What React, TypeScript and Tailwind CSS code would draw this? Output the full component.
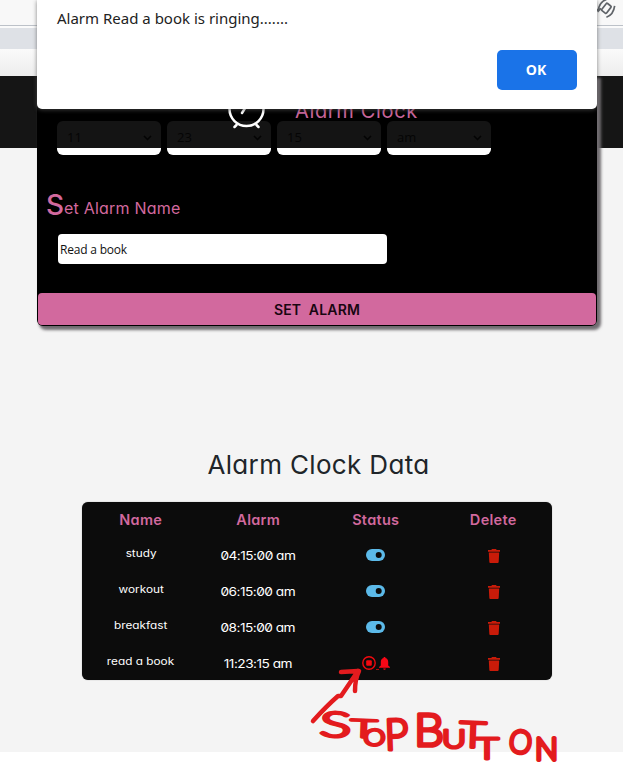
import type { ReactNode } from "react";

const rows = [
  { name: "study", time: "04:15:00 am", ringing: false },
  { name: "workout", time: "06:15:00 am", ringing: false },
  { name: "breakfast", time: "08:15:00 am", ringing: false },
  { name: "read a book", time: "11:23:15 am", ringing: true },
];

const marks = [
  { c: "S", x: 319, y: 736, h: 25, w: 32, r: 3, s: 2.8 },
  { c: "T", x: 350, y: 737, h: 18, w: 27, r: 2, s: 2.5 },
  { c: "O", x: 364, y: 746, h: 16, w: 22, r: -4, s: 3 },
  { c: "P", x: 385, y: 750, h: 31, w: 24, r: -2, s: 3.4 },
  { c: "B", x: 414, y: 746, h: 33, w: 30, r: 0, s: 3.6 },
  { c: "U", x: 442, y: 748, h: 19, w: 24, r: 0, s: 3.2 },
  { c: "T", x: 459, y: 747, h: 26, w: 27, r: 2, s: 3 },
  { c: "T", x: 475, y: 759, h: 21, w: 24, r: 0, s: 2.8 },
  { c: "O", x: 508, y: 752, h: 23, w: 23, r: 6, s: 3.6 },
  { c: "N", x: 535, y: 760, h: 22, w: 23, r: 0, s: 3.8 },
];

function Comic({ children, className }: { children: ReactNode; className: string }) {
  return (
    <span className={`inline-block whitespace-pre font-['Inter',sans-serif] [font-feature-settings:'cv11'] ${className}`}>
      {children}
    </span>
  );
}

function Select({ value }: { value: string }) {
  return (
    <div className="h-[34px] w-[104px] rounded-[6px] bg-[linear-gradient(#141414_27px,#ffffff_27px)]">
      <div className="flex h-[27px] items-center justify-between pl-[10px] pr-[9px] pt-[6px] font-['Open_Sans',sans-serif] text-[13px] text-[#050505]">
        <span>{value}</span>
        <svg width="9" height="6" viewBox="0 0 9 6" fill="none" stroke="#030303" strokeWidth="1.5">
          <path d="M1 1l3.5 3.5L8 1" />
        </svg>
      </div>
    </div>
  );
}

function Toggle() {
  return (
    <svg width="19" height="12" viewBox="0 0 19 12">
      <rect width="19" height="12" rx="6" fill="#5cbae9" />
      <circle cx="12.7" cy="6" r="3" fill="#0c0c0c" />
    </svg>
  );
}

function Trash() {
  return (
    <svg className="ml-[2px]" width="12" height="14" viewBox="0 0 12 14" fill="#c91b09">
      <path d="M4 0h4l.7.9H12v1.800H0V.9h3.300zM.8 3.400h10.400l-.5 9.300c0 .8-.5 1.300-1.300 1.300H2.600c-.8 0-1.300-.5-1.300-1.300z" />
    </svg>
  );
}

function Ringing() {
  return (
    <div className="flex items-center">
      <svg width="14" height="14" viewBox="0 0 14 14">
        <circle cx="7" cy="7" r="6.200" fill="none" stroke="#f1090f" strokeWidth="1.400" />
        <rect x="4.200" y="4.200" width="5.600" height="5.600" rx="1" fill="#f1090f" />
      </svg>
      <span className="mt-[13px] h-px w-[3px] bg-[#b00b0b]" />
      <svg width="11" height="13" viewBox="0 0 11 13" fill="#f90716">
        <path d="M5.500 0c.7 0 1 .4 1 1 1.800.5 2.700 2 2.700 4v3.500L11 10v.8H0V10l1.800-1.500V5c0-2 .9-3.500 2.700-4 0-.6.300-1 1-1zM4.200 11.500h2.600c0 1.700-2.600 1.700-2.600 0z" />
      </svg>
    </div>
  );
}

export default function App() {
  return (
    <div className="relative h-[767px] w-[623px] overflow-hidden bg-white">
      <div className="flex h-[26px] justify-end border-b border-[#bcc1c8] bg-[#f8f8f8]">
        <svg width="26" height="22" viewBox="0 0 26 22" fill="none" stroke="#5f6368" strokeWidth="1.700">
          <g transform="rotate(38 9 8)">
            <rect x="6.500" y="3.500" width="6" height="9" rx="1" />
            <path d="M4 1c-2.500 4-2.500 9 .5 14M1 14.500l3.800.8.5-3.800M15 15c2.500-4 2.500-9-.5-14" />
          </g>
        </svg>
      </div>
      <div className="h-[2px] bg-[#fafafa]" />
      <div className="h-[21px] bg-[#dee1e6]" />
      <div className="h-[27px] bg-gradient-to-b from-[#fafafa] to-[#ededed]" />
      <div className="h-[72px] bg-[#151515]" />
      <div className="h-[604px] bg-[#f4f4f4]">
        <div className="relative -top-[72px] ml-[37px] flex h-[250px] w-[560px] flex-col rounded-b-[6px] bg-black shadow-[3px_3px_3px_1px_#706c70]">
          <div className="relative z-10 flex h-[45px] items-end">
            <svg className="mb-[-11px] ml-[190px] shrink-0" width="40" height="40" viewBox="0 0 40 40" fill="none" stroke="white" strokeWidth="2.500" strokeLinecap="round">
              <circle cx="19.500" cy="17" r="17" />
              <path d="M20 13l-5 8M9.500 33l-2 2M29.500 33l2 2" />
            </svg>
            <Comic className="ml-[28px] text-[20px] leading-[20px] tracking-[0.650px] text-[#c9659a]">Alarm Clock</Comic>
          </div>
          <div className="flex gap-[6px] pl-[20px]">
            <Select value="11" />
            <Select value="23" />
            <Select value="15" />
            <Select value="am" />
          </div>
          <div className="flex h-[79px] items-end pb-[15px] pl-[9px] text-[#d2699e]">
            <Comic className="text-[28px] font-medium leading-[28px]">S</Comic>
            <Comic className="mb-[-1px] text-[16px] leading-[24px] tracking-[0.200px]">et Alarm Name</Comic>
          </div>
          <div className="ml-[21px] flex h-[30px] w-[329px] items-center rounded-[4px] bg-white pl-[2px] pt-[2px] font-['Open_Sans',sans-serif] text-[12px] tracking-[-0.200px] text-[#111]">
            Read a book
          </div>
          <div className="mx-px mb-px mt-auto flex h-[32px] items-center justify-center rounded-[4px] bg-[#d2699e] text-[#180611]">
            <Comic className="text-[14px] font-semibold tracking-[0.200px]">SET  ALARM</Comic>
          </div>
        </div>
        <div className="mt-[49px] text-center">
          <Comic className="ml-[14px] text-[26px] leading-[36px] tracking-[0.350px] text-[#202529]">Alarm Clock Data</Comic>
        </div>
        <div className="ml-[82px] mt-[19px] h-[178px] w-[470px] rounded-[6px] bg-[#0c0c0c] shadow-[0_0_1px_#777]">
          <div className="grid h-[36px] grid-cols-4 items-center justify-items-center text-[#d2699e]">
            {["Name", "Alarm", "Status", "Delete"].map((h) => (
              <Comic key={h} className="text-[14.500px] font-semibold tracking-[0.300px]">{h}</Comic>
            ))}
          </div>
          {rows.map((r) => (
            <div key={r.name} className="grid h-[36px] grid-cols-4 items-center justify-items-center font-['Inter',sans-serif] text-white [font-feature-settings:'zero','cv11']">
              <div className="-mt-[5px] scale-x-[1.180] whitespace-nowrap text-[10px]">{r.name}</div>
              <div className="scale-x-[1.140] whitespace-nowrap text-[12px] tracking-[-0.450px]">{r.time}</div>
              {r.ringing ? <div className="-mt-[2px] ml-[1px]"><Ringing /></div> : <div className="-mt-[2px] flex"><Toggle /></div>}
              <Trash />
            </div>
          ))}
        </div>
      </div>
      <svg className="pointer-events-none absolute inset-0" width="623" height="767" viewBox="0 0 623 767" fill="none" stroke="#e31b1e" strokeLinecap="round" strokeLinejoin="round">
        <path d="M313 721c9-10 17-18 25-25h3l17-25M341 672l17-1M359 671c-3 6-4 13-4 20" strokeWidth="4.500" />
        {marks.map((m, i) => (
          <text key={i} x={m.x} y={m.y} textLength={m.w} lengthAdjust="spacingAndGlyphs" transform={`rotate(${m.r} ${m.x} ${m.y})`} fontFamily="Lato, sans-serif" fontWeight="300" fontSize={m.h / 0.72} fill="#e31b1e" strokeWidth={m.s}>
            {m.c}
          </text>
        ))}
      </svg>
      <div className="absolute left-[37px] top-0 z-20 h-[109px] w-[560px] rounded-b-[5px] bg-white shadow-[0_1px_4px_rgba(80,80,80,0.7)]">
        <div className="pl-[20px] pt-[6px] font-['Noto_Sans',sans-serif] text-[15px] leading-[24px] text-[#222]">Alarm Read a book is ringing.......</div>
        <button className="absolute bottom-[19px] right-[20px] h-[40px] w-[80px] rounded-[5px] bg-[#1a73e8] pb-[1px] pr-[2px] font-['Open_Sans',sans-serif] text-[14px] font-bold text-white">OK</button>
      </div>
    </div>
  );
}
